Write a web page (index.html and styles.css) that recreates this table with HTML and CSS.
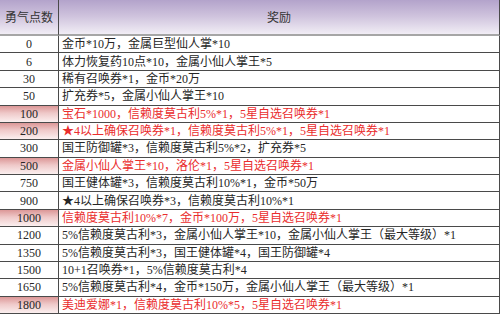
FILE: index.html
```html
<!DOCTYPE html>
<html lang="zh">
<head>
<meta charset="utf-8">
<link rel="stylesheet" href="styles.css">
</head>
<body>
<table class="rewards">
  <thead>
    <tr class="head">
      <th class="pts">勇气点数</th>
      <th class="rw">奖励</th>
    </tr>
  </thead>
  <tbody>
    <tr><td class="pts">0</td><td class="rw">金币*10万，金属巨型仙人掌*10</td></tr>
    <tr><td class="pts">6</td><td class="rw">体力恢复药10点*10，金属小仙人掌王*5</td></tr>
    <tr><td class="pts">30</td><td class="rw">稀有召唤券*1，金币*20万</td></tr>
    <tr><td class="pts">50</td><td class="rw">扩充券*5，金属小仙人掌王*10</td></tr>
    <tr class="hot"><td class="pts">100</td><td class="rw">宝石*1000，信赖度莫古利5%*1，5星自选召唤券*1</td></tr>
    <tr class="hot"><td class="pts">200</td><td class="rw">★4以上确保召唤券*1，信赖度莫古利5%*1，5星自选召唤券*1</td></tr>
    <tr><td class="pts">300</td><td class="rw">国王防御罐*3，信赖度莫古利5%*2，扩充券*5</td></tr>
    <tr class="hot"><td class="pts">500</td><td class="rw">金属小仙人掌王*10，洛伦*1，5星自选召唤券*1</td></tr>
    <tr><td class="pts">750</td><td class="rw">国王健体罐*3，信赖度莫古利10%*1，金币*50万</td></tr>
    <tr><td class="pts">900</td><td class="rw">★4以上确保召唤券*3，信赖度莫古利10%*1</td></tr>
    <tr class="hot"><td class="pts">1000</td><td class="rw">信赖度莫古利10%*7，金币*100万，5星自选召唤券*1</td></tr>
    <tr><td class="pts">1200</td><td class="rw">5%信赖度莫古利*3，金属小仙人掌王*10，金属小仙人掌王（最大等级）*1</td></tr>
    <tr><td class="pts">1350</td><td class="rw">5%信赖度莫古利*3，国王健体罐*4，国王防御罐*4</td></tr>
    <tr><td class="pts">1500</td><td class="rw">10+1召唤券*1，5%信赖度莫古利*4</td></tr>
    <tr><td class="pts">1650</td><td class="rw">5%信赖度莫古利*4，金币*150万，金属小仙人掌王（最大等级）*1</td></tr>
    <tr class="hot"><td class="pts">1800</td><td class="rw">美迪爱娜*1，信赖度莫古利10%*5，5星自选召唤券*1</td></tr>
  </tbody>
</table>
</body>
</html>
```

FILE: styles.css
```css
html, body {
  margin: 0;
  padding: 0;
  background: #ffffff;
}

.rewards {
  width: 500px;
  border-collapse: separate;
  border-spacing: 0;
  table-layout: fixed;
  font-family: "Liberation Serif", "Noto Sans CJK SC", serif;
  font-size: 12px;
  color: #262626;
}

.rewards th,
.rewards td {
  padding: 0;
  white-space: nowrap;
  overflow: hidden;
  line-height: 14px;
}

.rewards .pts {
  width: 58px;
  text-align: center;
  border-right: 1px solid #4a4a4a;
}

.rewards .rw {
  text-align: left;
  padding-left: 3px;
  border-right: 1px solid #4a4a4a;
}

.head {
  height: 36px;
  background: linear-gradient(to bottom, #b3a3cb 0%, #cfc3dd 45%, #f5f2f8 100%);
}

.head th {
  font-family: "Noto Sans CJK SC", sans-serif;
  font-weight: normal;
  color: #333333;
  border-bottom: 2px solid #a6a6a6;
}

.head .rw {
  text-align: center;
  padding-left: 0;
}

tbody tr {
  height: 17.375px;
}

tbody td {
  border-bottom: 1px solid #4a4a4a;
}

.hot .pts {
  background: linear-gradient(to bottom, #dc9797 0%, #efc9c9 45%, #fbefef 100%);
}

.hot .rw {
  color: #ea2d2d;
}
```
